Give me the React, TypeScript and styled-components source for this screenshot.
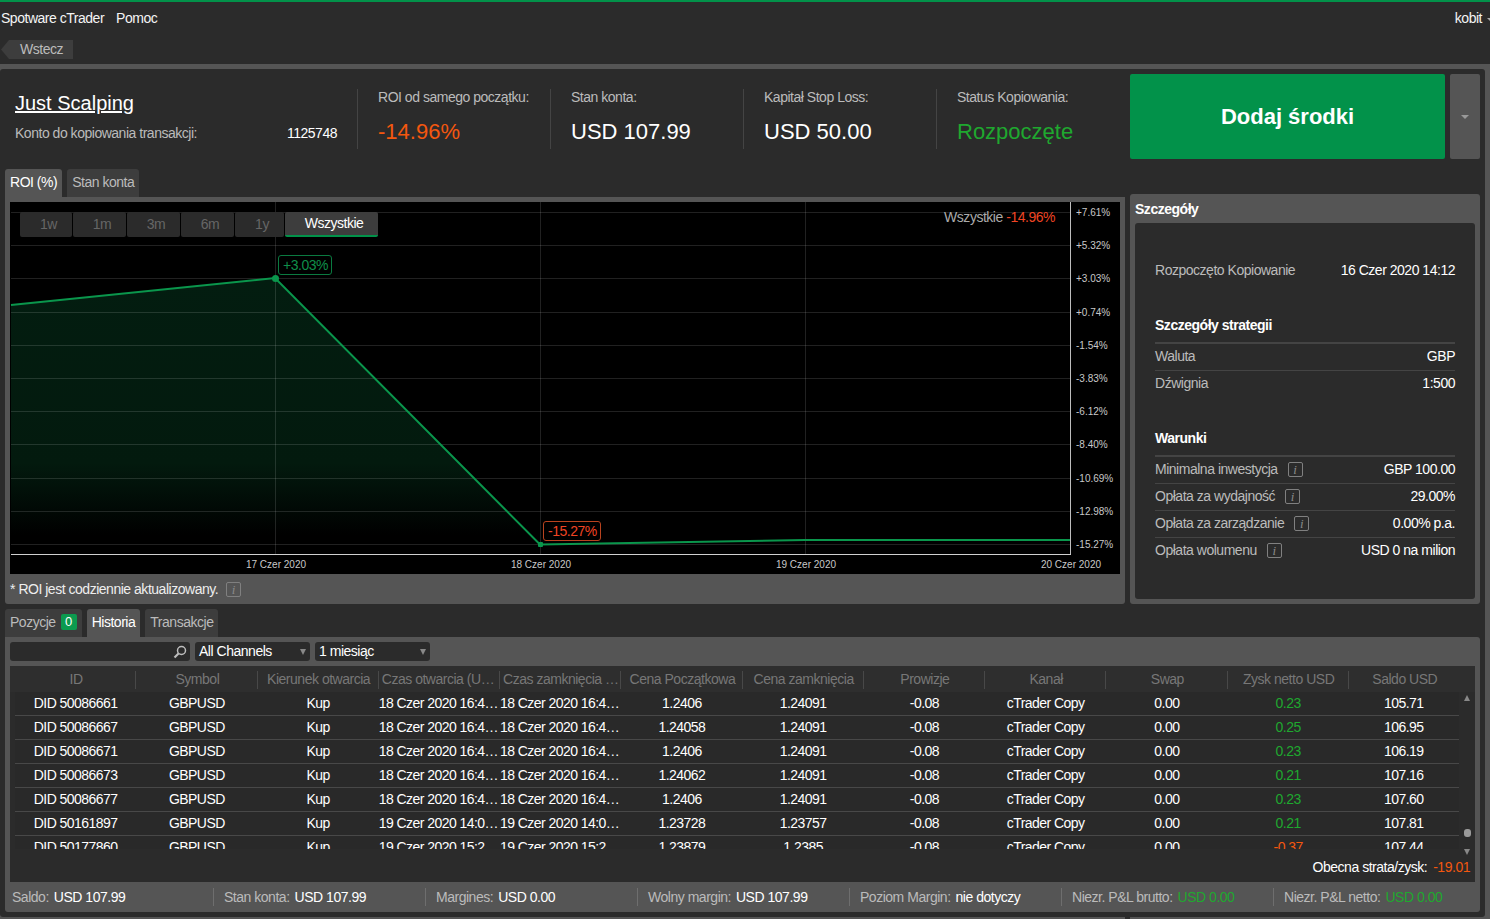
import React from 'react'
import styled, { createGlobalStyle } from 'styled-components'

const GlobalStyle = createGlobalStyle`
  html, body {
    margin: 0;
    padding: 0;
    height: 919px;
    overflow: hidden;
    background: #2b2b2b;
    color: #fff;
    font-family: "Liberation Sans", Arial, sans-serif;
    font-size: 14px;
    letter-spacing: -0.48px;
  }
  * { box-sizing: border-box; }
`

const GREEN = '#02924a'
const TEXT_GREEN = '#1fa82f'
const ORANGE = '#f4570f'
const RED = '#ef4423'

const Page = styled.div`
  width: 1490px;
  height: 919px;
  overflow: hidden;
  border-top: 2px solid ${GREEN};
  display: flex;
  flex-direction: column;
`

const MenuBar = styled.div`
  height: 32px;
  padding: 0 8px 0 1px;
  display: flex;
  align-items: center;
  gap: 12px;
`

const MenuItem = styled.span`
  color: #f4f4f4;
`

const User = styled(MenuItem)`
  margin-left: auto;

  &::after {
    content: '';
    display: inline-block;
    vertical-align: middle;
    margin: 0 -11px 0 5px;
    border: 3px solid transparent;
    border-top-color: #aaa;
    border-bottom: 0;
  }
`

const BackRow = styled.div`
  height: 30px;
  padding: 6px 0 0 1px;
`

const BackButton = styled.div`
  width: 72px;
  height: 19px;
  padding-left: 19px;
  background: #3d3d3d;
  color: #bbb;
  line-height: 19px;
  clip-path: polygon(8px 0, 100% 0, 100% 100%, 8px 100%, 0 50%);
`

const Shell = styled.div`
  position: relative;
  flex: 1;
  min-height: 0;
  background: #555;
  padding: 5px 5px 2px 0;
`

const Notch = styled.div`
  position: absolute;
  left: 1125px;
  bottom: 0;
  width: 5px;
  height: 2px;
  background: #2b2b2b;
`

const Content = styled.div`
  height: 100%;
  background: #2b2b2b;
  border-radius: 3px;
  padding: 0 5px;
`

const Summary = styled.div`
  height: 100px;
  display: flex;
  margin-right: -5px;
`

const Account = styled.div`
  width: 352px;
  height: 80px;
  padding: 20px 20px 0 10px;
`

const Title = styled.div`
  font-size: 20px;
  line-height: 28px;
  letter-spacing: 0;
  text-decoration: underline;
  color: #fff;
`

const AccountRow = styled.div`
  margin-top: 8px;
  display: flex;
  justify-content: space-between;
  color: #bbb;
  line-height: 16px;
`

const White = styled.span`
  color: #fff;
`

const Stat = styled.div`
  width: 193px;
  height: 60px;
  margin-top: 20px;
  padding-left: 20px;
  border-left: 1px solid #444;
`

const StatLabel = styled.div`
  color: #bbb;
  line-height: 16px;
`

const StatValue = styled.div<{ $color: string }>`
  margin-top: 14px;
  font-size: 22px;
  line-height: 26px;
  letter-spacing: 0;
  color: ${(p) => p.$color};
`

const FundButton = styled.div`
  width: 315px;
  height: 85px;
  margin: 5px 0 0 1px;
  background: ${GREEN};
  border-radius: 2px;
  font-size: 22px;
  font-weight: bold;
  letter-spacing: 0;
  display: flex;
  align-items: center;
  justify-content: center;
`

const FundCaret = styled.div`
  width: 30px;
  height: 85px;
  margin: 5px 0 0 5px;
  background: #555;
  border-radius: 2px;
  display: flex;
  align-items: center;
  justify-content: center;

  &::after {
    content: '';
    border: 4px solid transparent;
    border-top: 4px solid #999;
    border-bottom: 0;
  }
`

const Middle = styled.div`
  display: flex;
  align-items: flex-end;
  gap: 5px;
`

const ChartColumn = styled.div`
  width: 1120px;
`

const Tabs = styled.div`
  height: 28px;
  display: flex;
  gap: 5px;
`

const Tab = styled.div<{ $active?: boolean }>`
  padding: 0 5px 2px;
  height: 28px;
  border-radius: 3px 3px 0 0;
  background: ${(p) => (p.$active ? '#555' : '#3d3d3d')};
  color: ${(p) => (p.$active ? '#fff' : '#bbb')};
  display: flex;
  align-items: center;
  gap: 5px;
`

const Badge = styled.span`
  width: 16px;
  height: 16px;
  background: #0c9a4f;
  border-radius: 2px;
  color: #fff;
  font-size: 13px;
  line-height: 15px;
  letter-spacing: 0;
  text-align: center;
`

const ChartPanel = styled.div`
  height: 407px;
  background: #555;
  border-radius: 0 0 3px 3px;
  padding: 5px 5px 0;
`

const ChartBox = styled.div`
  position: relative;
  height: 372px;
  background: #000;
`

const ChartSvg = styled.svg`
  display: block;
`

const AxisText = styled.text`
  font-family: "Liberation Sans", Arial, sans-serif;
  font-size: 10px;
  letter-spacing: 0;
  fill: #c8c8c8;
`

const Ranges = styled.div`
  position: absolute;
  left: 10px;
  top: 10px;
  display: flex;
  gap: 1px;
`

const Range = styled.div<{ $width: number; $active?: boolean }>`
  width: ${(p) => p.$width}px;
  height: 25px;
  padding-left: 5px;
  line-height: ${(p) => (p.$active ? '23px' : '25px')};
  text-align: center;
  background: ${(p) => (p.$active ? '#3d3d3d' : '#2b2b2b')};
  color: ${(p) => (p.$active ? '#fff' : '#666')};
  border-bottom: ${(p) => (p.$active ? `2px solid ${GREEN}` : '0')};
  border-radius: 2px;
`

const RangeSummary = styled.div`
  position: absolute;
  right: 65px;
  top: 7px;
  color: #aaa;
  line-height: 16px;
`

const Red = styled.span`
  color: ${RED};
`

const PointLabel = styled.div<{ $left: number; $top: number; $color: string; $border: string }>`
  position: absolute;
  left: ${(p) => p.$left}px;
  top: ${(p) => p.$top}px;
  height: 20px;
  padding: 0 3px 0 4px;
  line-height: 18px;
  border: 1px solid ${(p) => p.$border};
  border-radius: 3px;
  color: ${(p) => p.$color};
`

const ChartNote = styled.div`
  height: 30px;
  display: flex;
  align-items: center;
  gap: 8px;
  color: #eee;
`

const Info = styled.span`
  width: 15px;
  height: 15px;
  flex: none;
  border: 1px solid #808080;
  border-radius: 2px;
  color: #8a8a8a;
  font-family: "Liberation Serif", serif;
  font-style: italic;
  font-size: 13px;
  line-height: 13px;
  letter-spacing: 0;
  text-align: center;
`

const DetailsPanel = styled.div`
  width: 350px;
  height: 410px;
  background: #555;
  border-radius: 3px;
  padding: 0 5px 5px;
  display: flex;
  flex-direction: column;
`

const DetailsTitle = styled.div`
  height: 29px;
  line-height: 30px;
  font-weight: bold;
  color: #fff;
`

const DetailsBody = styled.div`
  flex: 1;
  background: #2b2b2b;
  border-radius: 3px;
  padding: 35px 20px 0;
`

const DetailRow = styled.div<{ $plain?: boolean }>`
  height: 27px;
  padding-bottom: 2px;
  display: flex;
  align-items: center;
  justify-content: space-between;
  border-bottom: 1px solid ${(p) => (p.$plain ? 'transparent' : '#444')};
  color: #bbb;

  &:last-child {
    border-bottom-color: transparent;
  }
`

const DetailLabel = styled.span`
  display: flex;
  align-items: center;
  gap: 10px;
`

const DetailGroup = styled.div`
  margin-top: 32px;
`

const DetailHeading = styled.div`
  line-height: 16px;
  padding-bottom: 9px;
  font-weight: bold;
  color: #fff;
  border-bottom: 2px solid #444;
`

const Bottom = styled.div`
  margin-top: 5px;
`

const HistoryPanel = styled.div`
  height: 275px;
  background: #555;
  border-radius: 0 3px 3px 3px;
  display: flex;
  flex-direction: column;
`

const Toolbar = styled.div`
  height: 29px;
  padding: 5px 5px 0;
  display: flex;
  gap: 5px;
`

const SearchBox = styled.div`
  width: 180px;
  height: 19px;
  background: #2b2b2b;
  border-radius: 3px;
  padding-right: 3px;
  display: flex;
  align-items: center;
  justify-content: flex-end;
`

const Select = styled.div<{ $width: number }>`
  width: ${(p) => p.$width}px;
  height: 19px;
  background: #2b2b2b;
  border-radius: 3px;
  padding: 0 4px;
  line-height: 19px;
  color: #fff;
  display: flex;
  justify-content: space-between;
  align-items: center;

  &::after {
    content: '';
    border: 3px solid transparent;
    border-top: 6px solid #888;
    border-bottom: 0;
  }
`

const TableBox = styled.div`
  position: relative;
  height: 216px;
  margin: 0 5px;
  background: #2b2b2b;
`

const HeaderRow = styled.div`
  display: grid;
  grid-template-columns: repeat(11, 121.25px) 110px;
  height: 26px;
  padding: 5px 0 3px 5px;
  background: #2e2e2e;
`

const HeaderCell = styled.div`
  border-right: 1px solid #484848;
  padding: 0 1px 0 3px;
  line-height: 17px;
  text-align: center;
  color: #777;
  white-space: nowrap;
  overflow: hidden;
  text-overflow: ellipsis;

  &:last-child {
    border-right: 0;
  }
`

const RowList = styled.div`
  width: 1444px;
  height: 157px;
  margin-left: 5px;
  overflow: hidden;
  background: #292929;
`

const Row = styled.div`
  display: grid;
  grid-template-columns: repeat(11, 121.25px) 110px;
  height: 24px;
  line-height: 23px;
  border-bottom: 1px solid #484848;
`

const Cell = styled.div<{ $color?: string }>`
  text-align: center;
  letter-spacing: -0.55px;
  color: ${(p) => p.$color || '#fff'};
  white-space: nowrap;
  overflow: hidden;
  text-overflow: ellipsis;
`

const Scrollbar = styled.div`
  position: absolute;
  right: 0;
  top: 25px;
  width: 16px;
  height: 164px;
`

const ScrollArrow = styled.div<{ $down?: boolean }>`
  position: absolute;
  left: 5px;
  ${(p) => (p.$down ? 'bottom: 0;' : 'top: 4px;')}
  border: 3px solid transparent;
  ${(p) => (p.$down ? 'border-top: 6px solid #888; border-bottom: 0;' : 'border-bottom: 6px solid #888; border-top: 0;')}
`

const ScrollThumb = styled.div`
  position: absolute;
  left: 5px;
  top: 138px;
  width: 7px;
  height: 8px;
  border-radius: 3px;
  background: #9a9a9a;
`

const Total = styled.div`
  height: 35px;
  padding-right: 5px;
  display: flex;
  align-items: center;
  justify-content: flex-end;
  gap: 6px;
  color: #fff;
`

const Footer = styled.div`
  flex: 1;
  display: flex;
  align-items: center;
`

const FooterItem = styled.div`
  flex: none;
  width: 212px;
  height: 18px;
  padding-left: 10px;
  border-left: 1px solid #6e6e6e;
  line-height: 18px;
  color: #bbb;
  display: flex;
  gap: 5px;

  &:first-child {
    width: 208px;
    padding-left: 7px;
    border-left: 0;
  }
`

const FooterValue = styled.span<{ $color?: string }>`
  color: ${(p) => p.$color || '#fff'};
`

const ranges = [
  { label: '1w', width: 52 },
  { label: '1m', width: 53 },
  { label: '3m', width: 53 },
  { label: '6m', width: 53 },
  { label: '1y', width: 49 },
]

const yLabels = ['+7.61%', '+5.32%', '+3.03%', '+0.74%', '-1.54%', '-3.83%', '-6.12%', '-8.40%', '-10.69%', '-12.98%', '-15.27%']
const yLines = [212, 245, 278, 312, 345, 378, 411, 444, 478, 511, 544]
const xLabels = [
  { x: 275, label: '17 Czer 2020' },
  { x: 540, label: '18 Czer 2020' },
  { x: 805, label: '19 Czer 2020' },
  { x: 1070, label: '20 Czer 2020' },
]

const Chart = () => (
  <ChartSvg width={1110} height={372} viewBox="10 202 1110 372">
    <defs>
      <linearGradient id="roiFill" gradientUnits="userSpaceOnUse" x1="0" y1="278" x2="0" y2="535">
        <stop offset="0" stopColor="#031d10" />
        <stop offset="0.72" stopColor="#031a0e" />
        <stop offset="1" stopColor="#000" />
      </linearGradient>
    </defs>
    <path d="M11 305 L275 278 L540 544.5 L805 540 L1070 540 L1070 554 L11 554 Z" fill="url(#roiFill)" />
    {yLines.map((y) => (
      <line key={y} x1={11} x2={1071} y1={y + 0.5} y2={y + 0.5} stroke="#fff" strokeOpacity="0.13" />
    ))}
    {xLabels.slice(0, 3).map((t) => (
      <line key={t.x} x1={t.x + 0.5} x2={t.x + 0.5} y1={202} y2={554} stroke="#fff" strokeOpacity="0.13" />
    ))}
    <path d="M11 305 L275 278 L540 544.5 L805 540 L1070 540" fill="none" stroke="#0a964c" strokeWidth="2" />
    <circle cx={275.5} cy={278.5} r={3.5} fill="#0a964c" />
    <rect x={538} y={542} width={5} height={5} rx={1} fill="#0a964c" />
    <line x1={1070.5} x2={1070.5} y1={202} y2={554} stroke="#bdbdbd" />
    <line x1={11} x2={1071} y1={554.5} y2={554.5} stroke="#d0d0d0" />
    {yLabels.map((label, i) => (
      <AxisText key={label} x={1076} y={yLines[i] + 4}>
        {label}
      </AxisText>
    ))}
    {xLabels.map((t) => (
      <AxisText key={t.label} x={t.x + 1} y={568} textAnchor="middle">
        {t.label}
      </AxisText>
    ))}
  </ChartSvg>
)

const SearchIcon = () => (
  <svg width="14" height="14" viewBox="0 0 14 14">
    <circle cx="8.5" cy="5.5" r="4" fill="none" stroke="#bdbdbd" strokeWidth="1.5" />
    <line x1="5.5" y1="8.5" x2="1.5" y2="12.5" stroke="#bdbdbd" strokeWidth="2.2" />
  </svg>
)

const columns = [
  'ID',
  'Symbol',
  'Kierunek otwarcia',
  'Czas otwarcia (UTC+0)',
  'Czas zamknięcia (UTC+0)',
  'Cena Początkowa',
  'Cena zamknięcia',
  'Prowizje',
  'Kanał',
  'Swap',
  'Zysk netto USD',
  'Saldo USD',
]

const trades = [
  ['50086661', '18 Czer 2020 16:41:12', '1.2406', '0.23', '105.71'],
  ['50086667', '18 Czer 2020 16:41:12', '1.24058', '0.25', '106.95'],
  ['50086671', '18 Czer 2020 16:41:12', '1.2406', '0.23', '106.19'],
  ['50086673', '18 Czer 2020 16:41:12', '1.24062', '0.21', '107.16'],
  ['50086677', '18 Czer 2020 16:41:12', '1.2406', '0.23', '107.60'],
  ['50161897', '19 Czer 2020 14:02:31', '1.23728', '0.21', '107.81'],
  ['50177860', '19 Czer 2020 15:24:03', '1.23879', '-0.37', '107.44'],
]

const closePrice = (id: string) => {
  if (id === '50161897') return '1.23757'
  if (id === '50177860') return '1.2385'
  return '1.24091'
}

const terms = [
  ['Minimalna inwestycja', 'GBP 100.00'],
  ['Opłata za wydajność', '29.00%'],
  ['Opłata za zarządzanie', '0.00% p.a.'],
  ['Opłata wolumenu', 'USD 0 na milion'],
]

const App = () => {
  return (
    <Page>
      <GlobalStyle />
      <MenuBar>
        <MenuItem>Spotware cTrader</MenuItem>
        <MenuItem>Pomoc</MenuItem>
        <User>kobit</User>
      </MenuBar>
      <BackRow>
        <BackButton>Wstecz</BackButton>
      </BackRow>
      <Shell>
        <Content>
          <Summary>
            <Account>
              <Title>Just Scalping</Title>
              <AccountRow>
                Konto do kopiowania transakcji:
                <White>1125748</White>
              </AccountRow>
            </Account>
            <Stat>
              <StatLabel>ROI od samego początku:</StatLabel>
              <StatValue $color={ORANGE}>-14.96%</StatValue>
            </Stat>
            <Stat>
              <StatLabel>Stan konta:</StatLabel>
              <StatValue $color="#fff">USD 107.99</StatValue>
            </Stat>
            <Stat>
              <StatLabel>Kapitał Stop Loss:</StatLabel>
              <StatValue $color="#fff">USD 50.00</StatValue>
            </Stat>
            <Stat>
              <StatLabel>Status Kopiowania:</StatLabel>
              <StatValue $color={TEXT_GREEN}>Rozpoczęte</StatValue>
            </Stat>
            <FundButton>Dodaj środki</FundButton>
            <FundCaret />
          </Summary>

          <Middle>
            <ChartColumn>
              <Tabs>
                <Tab $active>ROI (%)</Tab>
                <Tab>Stan konta</Tab>
              </Tabs>
              <ChartPanel>
                <ChartBox>
                  <Chart />
                  <Ranges>
                    {ranges.map((r) => (
                      <Range key={r.label} $width={r.width}>
                        {r.label}
                      </Range>
                    ))}
                    <Range $width={93} $active>
                      Wszystkie
                    </Range>
                  </Ranges>
                  <RangeSummary>
                    Wszystkie <Red>-14.96%</Red>
                  </RangeSummary>
                  <PointLabel $left={268} $top={53} $color="#0f8f4a" $border="#0a7a40">
                    +3.03%
                  </PointLabel>
                  <PointLabel $left={533} $top={319} $color={RED} $border="#b8431f">
                    -15.27%
                  </PointLabel>
                </ChartBox>
                <ChartNote>
                  * ROI jest codziennie aktualizowany.
                  <Info>i</Info>
                </ChartNote>
              </ChartPanel>
            </ChartColumn>

            <DetailsPanel>
              <DetailsTitle>Szczegóły</DetailsTitle>
              <DetailsBody>
                <DetailRow $plain>
                  Rozpoczęto Kopiowanie
                  <White>16 Czer 2020 14:12</White>
                </DetailRow>
                <DetailGroup>
                  <DetailHeading>Szczegóły strategii</DetailHeading>
                  <DetailRow>
                    Waluta
                    <White>GBP</White>
                  </DetailRow>
                  <DetailRow>
                    Dźwignia
                    <White>1:500</White>
                  </DetailRow>
                </DetailGroup>
                <DetailGroup>
                  <DetailHeading>Warunki</DetailHeading>
                  {terms.map(([label, value]) => (
                    <DetailRow key={label}>
                      <DetailLabel>
                        {label}
                        <Info>i</Info>
                      </DetailLabel>
                      <White>{value}</White>
                    </DetailRow>
                  ))}
                </DetailGroup>
              </DetailsBody>
            </DetailsPanel>
          </Middle>

          <Bottom>
            <Tabs>
              <Tab>
                Pozycje
                <Badge>0</Badge>
              </Tab>
              <Tab $active>Historia</Tab>
              <Tab>Transakcje</Tab>
            </Tabs>
            <HistoryPanel>
              <Toolbar>
                <SearchBox>
                  <SearchIcon />
                </SearchBox>
                <Select $width={115}>All Channels</Select>
                <Select $width={115}>1 miesiąc</Select>
              </Toolbar>
              <TableBox>
                <HeaderRow>
                  {columns.map((c) => (
                    <HeaderCell key={c}>{c}</HeaderCell>
                  ))}
                </HeaderRow>
                <RowList>
                  {trades.map(([id, time, open, profit, balance]) => (
                    <Row key={id}>
                      <Cell>DID {id}</Cell>
                      <Cell>GBPUSD</Cell>
                      <Cell>Kup</Cell>
                      <Cell>{time}</Cell>
                      <Cell>{time}</Cell>
                      <Cell>{open}</Cell>
                      <Cell>{closePrice(id)}</Cell>
                      <Cell>-0.08</Cell>
                      <Cell>cTrader Copy</Cell>
                      <Cell>0.00</Cell>
                      <Cell $color={profit.startsWith('-') ? ORANGE : TEXT_GREEN}>{profit}</Cell>
                      <Cell>{balance}</Cell>
                    </Row>
                  ))}
                </RowList>
                <Scrollbar>
                  <ScrollArrow />
                  <ScrollThumb />
                  <ScrollArrow $down />
                </Scrollbar>
                <Total>
                  Obecna strata/zysk:
                  <FooterValue $color={ORANGE}>-19.01</FooterValue>
                </Total>
              </TableBox>
              <Footer>
                <FooterItem>
                  Saldo: <FooterValue>USD 107.99</FooterValue>
                </FooterItem>
                <FooterItem>
                  Stan konta: <FooterValue>USD 107.99</FooterValue>
                </FooterItem>
                <FooterItem>
                  Margines: <FooterValue>USD 0.00</FooterValue>
                </FooterItem>
                <FooterItem>
                  Wolny margin: <FooterValue>USD 107.99</FooterValue>
                </FooterItem>
                <FooterItem>
                  Poziom Margin: <FooterValue>nie dotyczy</FooterValue>
                </FooterItem>
                <FooterItem>
                  Niezr. P&amp;L brutto: <FooterValue $color={TEXT_GREEN}>USD 0.00</FooterValue>
                </FooterItem>
                <FooterItem>
                  Niezr. P&amp;L netto: <FooterValue $color={TEXT_GREEN}>USD 0.00</FooterValue>
                </FooterItem>
              </Footer>
            </HistoryPanel>
          </Bottom>
        </Content>
        <Notch />
      </Shell>
    </Page>
  )
}

export default App
